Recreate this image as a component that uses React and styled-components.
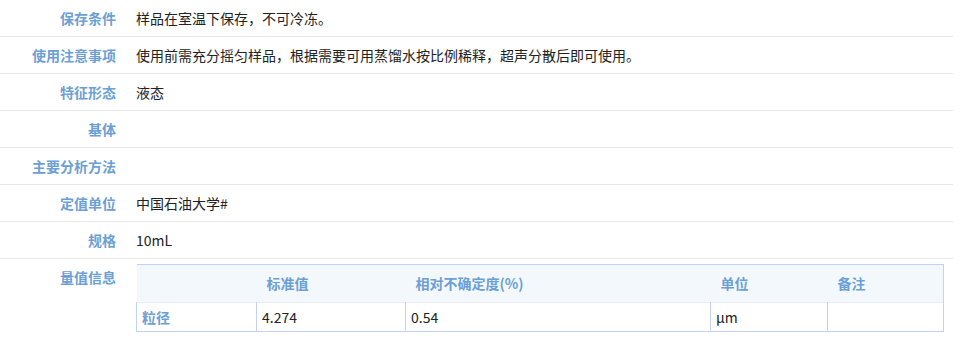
import React from "react";
import styled, { createGlobalStyle } from "styled-components";

const Global = createGlobalStyle`
  html, body { margin: 0; padding: 0; background: #fff; }
  body { font-family: "Microsoft YaHei", "Noto Sans CJK SC", "Noto Sans", sans-serif; font-size: 14px; color: #222; }
`;

const List = styled.div`
  width: 953px;
`;

const Row = styled.div`
  display: flex;
  align-items: flex-start;
  border-bottom: ${p => (p.$last ? "none" : "1px solid #e8e8e8")};
`;

const Label = styled.div`
  width: 116px;
  flex: none;
  text-align: right;
  font-weight: bold;
  color: #6b9fd5;
  line-height: 16px;
  padding: 10px 0;
`;

const Value = styled.div`
  margin-left: 20px;
  flex: 1;
  line-height: 16px;
  padding: ${p => (p.$table ? "5px 0" : "10px 0")};
  min-height: 16px;
`;

const Table = styled.table`
  border-collapse: collapse;
  width: 807px;
  table-layout: fixed;
`;

const Th = styled.th`
  background: #f3f8fd;
  color: #6b9fd5;
  font-weight: bold;
  text-align: left;
  height: 36px;
  padding: 0 0 1px 10px;
  border-top: 1px solid #c4d0f6;
  border-right: ${p => (p.$end ? "1px solid #c4d0f6" : "none")};
  line-height: 16px;
`;

const Td = styled.td`
  border: 1px solid #c4d0f6;
  border-top: 1px solid #e9ecf6;
  height: 28px;
  padding: 0 0 0 5px;
  line-height: 16px;
  color: ${p => (p.$name ? "#6b9fd5" : "#222")};
  font-weight: ${p => (p.$name ? "bold" : "normal")};
`;

const rows = [
  ["保存条件", "样品在室温下保存，不可冷冻。"],
  ["使用注意事项", "使用前需充分摇匀样品，根据需要可用蒸馏水按比例稀释，超声分散后即可使用。"],
  ["特征形态", "液态"],
  ["基体", ""],
  ["主要分析方法", ""],
  ["定值单位", "中国石油大学#"],
  ["规格", "10mL"],
];

const cols = [120, 149, 305, 117, 116];
const heads = ["", "标准值", "相对不确定度(%)", "单位", "备注"];

export default function App() {
  return (
    <>
      <Global />
      <List>
        {rows.map(([k, v]) => (
          <Row key={k}>
            <Label>{k}</Label>
            <Value>{v}</Value>
          </Row>
        ))}
        <Row $last>
          <Label>量值信息</Label>
          <Value $table>
            <Table>
              <colgroup>
                {cols.map((w, i) => (
                  <col key={i} style={{ width: w }} />
                ))}
              </colgroup>
              <thead>
                <tr>
                  {heads.map((h, i) => (
                    <Th key={i} $end={i === heads.length - 1}>{h}</Th>
                  ))}
                </tr>
              </thead>
              <tbody>
                <tr>
                  <Td $name>粒径</Td>
                  <Td>4.274</Td>
                  <Td>0.54</Td>
                  <Td>μm</Td>
                  <Td></Td>
                </tr>
              </tbody>
            </Table>
          </Value>
        </Row>
      </List>
    </>
  );
}
